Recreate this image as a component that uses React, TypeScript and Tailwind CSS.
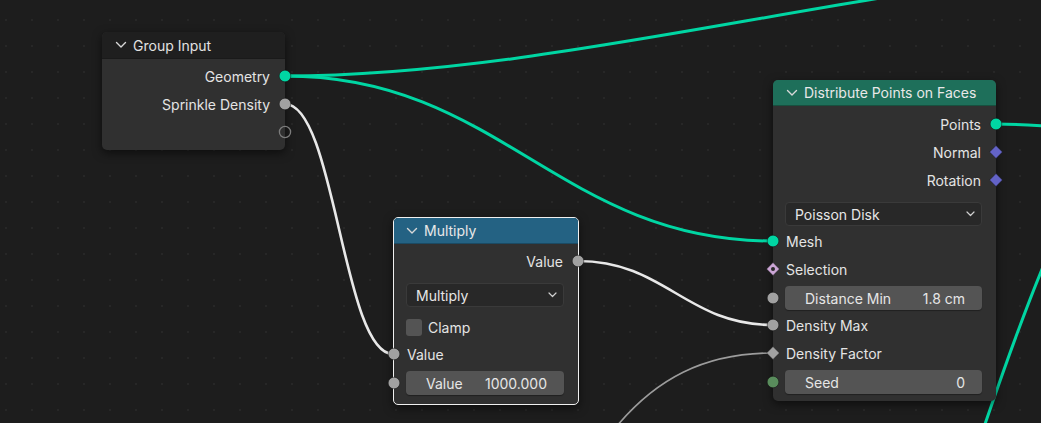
import React from "react";

const FONT = { fontFamily: "Inter, 'Noto Sans', sans-serif" };

function Chevron() {
  return (
    <svg width="12" height="8" viewBox="0 0 12 8" className="shrink-0">
      <polyline points="1.5,1.5 6,6 10.5,1.5" fill="none" stroke="#d8d8d8" strokeWidth="1.4" strokeLinecap="round" strokeLinejoin="round" />
    </svg>
  );
}

function SmallChevron() {
  return (
    <svg width="9" height="6" viewBox="0 0 9 6" className="shrink-0">
      <polyline points="1,1 4.5,4.5 8,1" fill="none" stroke="#d0d0d0" strokeWidth="1.2" strokeLinecap="round" strokeLinejoin="round" />
    </svg>
  );
}

type SocketKind = "geo" | "float" | "empty" | "vec" | "bool" | "floatDiamond" | "int";

function Socket({ kind, side }: { kind: SocketKind; side: "left" | "right" }) {
  const pos = side === "left" ? "left-[-7px]" : "right-[-7px]";
  let inner: React.ReactNode = null;
  const dia = "7,0.6 13.4,7 7,13.4 0.6,7";
  if (kind === "geo") inner = <circle cx="7" cy="7" r="5.8" fill="#00d6a3" stroke="#111" strokeOpacity="0.6" strokeWidth="0.8" />;
  if (kind === "float") inner = <circle cx="7" cy="7" r="5.8" fill="#a1a1a1" stroke="#111" strokeOpacity="0.6" strokeWidth="0.8" />;
  if (kind === "int") inner = <circle cx="7" cy="7" r="5.8" fill="#598c5c" stroke="#111" strokeOpacity="0.6" strokeWidth="0.8" />;
  if (kind === "empty") inner = <circle cx="7" cy="7" r="5.6" fill="none" stroke="#7c7c7c" strokeWidth="1.3" />;
  if (kind === "vec") inner = <polygon points={dia} fill="#6363c7" stroke="#111" strokeOpacity="0.5" strokeWidth="0.8" />;
  if (kind === "floatDiamond") inner = <polygon points={dia} fill="#a1a1a1" stroke="#111" strokeOpacity="0.5" strokeWidth="0.8" />;
  if (kind === "bool")
    inner = (
      <>
        <polygon points={dia} fill="#cca6d6" stroke="#111" strokeOpacity="0.5" strokeWidth="0.8" />
        <circle cx="7" cy="7" r="2" fill="#2a2a2a" />
      </>
    );
  return (
    <svg width="14" height="14" viewBox="0 0 14 14" className={`absolute top-1/2 -translate-y-1/2 ${pos}`}>
      {inner}
    </svg>
  );
}

function OutRow({ label, kind }: { label: string; kind: SocketKind }) {
  return (
    <div className="relative h-[28px] flex items-center justify-end pr-[15px] text-[14px] text-[#e4e4e4]">
      {label}
      <Socket kind={kind} side="right" />
    </div>
  );
}

function InRow({ label, kind, cls = "" }: { label: string; kind: SocketKind; cls?: string }) {
  return (
    <div className={`relative h-[28px] flex items-center pl-[13px] text-[14px] text-[#e4e4e4] ${cls}`}>
      {label}
      <Socket kind={kind} side="left" />
    </div>
  );
}

function Field({ label, value, kind, cls = "" }: { label: string; value: string; kind: SocketKind; cls?: string }) {
  return (
    <div className={`relative h-[24px] ${cls}`}>
      <Socket kind={kind} side="left" />
      <div className="ml-[12px] mr-[14px] h-full rounded-[4px] bg-[#545454] flex items-center justify-between pl-[20px] pr-[17px] text-[14px] text-[#e6e6e6] shadow-[0_1px_1px_rgba(0,0,0,0.35)]">
        <span>{label}</span>
        <span>{value}</span>
      </div>
    </div>
  );
}

function Dropdown({ label, cls = "" }: { label: string; cls?: string }) {
  return (
    <div className={`h-[24px] ml-[12px] mr-[14px] rounded-[4px] bg-[#282828] border border-[#3a3a3a] flex items-center justify-between pl-[9px] pr-[6px] text-[14px] text-[#e6e6e6] ${cls}`}>
      <span>{label}</span>
      <SmallChevron />
    </div>
  );
}

export default function App() {
  return (
    <div
      className="relative w-[1041px] h-[423px] overflow-hidden bg-[#1d1d1d] bg-[radial-gradient(circle,#272727_1px,transparent_1.2px)] bg-[length:26px_26px] bg-[position:-7px_7px]"
      style={FONT}
    >
      {/* wires */}
      <svg className="absolute inset-0" width="1041" height="423" viewBox="0 0 1041 423">
        <path d="M285,76 C480,76 690,28 905,-6" fill="none" stroke="#00d6a3" strokeWidth="3" />
        <path d="M285,76 C500,76 560,241 773,241" fill="none" stroke="#00d6a3" strokeWidth="3" />
        <path d="M996,124 C1015,124 1030,125 1045,126" fill="none" stroke="#00d6a3" strokeWidth="3" />
        <path d="M983,430 C1000,380 1025,310 1045,262" fill="none" stroke="#00d6a3" strokeWidth="3" />
        <path d="M285,104 C335,104 343,354 393,354" fill="none" stroke="#e8e8e8" strokeWidth="2.6" />
        <path d="M578,261 C665,261 686,325 773,325" fill="none" stroke="#e8e8e8" strokeWidth="2.6" />
        <path d="M773,353 C705,353 655,378 612,432" fill="none" stroke="#9c9c9c" strokeWidth="1.6" />
      </svg>

      {/* Group Input */}
      <div className="absolute left-[102px] top-[32px] w-[183px] rounded-[5px] bg-[#303030] shadow-[0_3px_10px_rgba(0,0,0,0.55)]">
        <div className="h-[27px] rounded-t-[5px] bg-[#1f1f1f] border-b border-[#1a1a1a] flex items-center gap-[6px] pl-[13px] text-[14px] text-[#e2e2e2]">
          <Chevron />
          <span>Group Input</span>
        </div>
        <div className="pt-[3px] pb-[4px]">
          <OutRow label="Geometry" kind="geo" />
          <OutRow label="Sprinkle Density" kind="float" />
          <OutRow label="" kind="empty" />
        </div>
      </div>

      {/* Multiply */}
      <div className="absolute left-[393px] top-[217px] w-[186px] rounded-[5px] border border-[#f0f0f0] bg-[#303030] shadow-[0_3px_10px_rgba(0,0,0,0.55)]">
        <div className="h-[26px] rounded-t-[4px] bg-[#246283] border-b border-[#1b4a63] flex items-center gap-[6px] pl-[12px] text-[14px] text-[#e8e8e8]">
          <Chevron />
          <span>Multiply</span>
        </div>
        <div className="pt-[3px] pb-[9px]">
          <OutRow label="Value" kind="float" />
          <Dropdown label="Multiply" cls="mt-[8px]" />
          <div className="mt-[9px] h-[22px] flex items-center gap-[6px] pl-[12px] text-[14px] text-[#e4e4e4]">
            <div className="w-[16px] h-[17px] rounded-[3px] bg-[#545454]" />
            <span>Clamp</span>
          </div>
          <InRow label="Value" kind="float" cls="mt-[2px]" />
          <Field label="Value" value="1000.000" kind="float" cls="mt-[3px]" />
        </div>
      </div>

      {/* Distribute Points on Faces */}
      <div className="absolute left-[773px] top-[80px] w-[223px] rounded-[5px] bg-[#303030] shadow-[0_3px_10px_rgba(0,0,0,0.55)]">
        <div className="h-[26px] rounded-t-[5px] bg-[#1e6f5a] border-b border-[#17503f] flex items-center gap-[6px] pl-[13px] text-[14px] text-[#e8e8e8]">
          <Chevron />
          <span>Distribute Points on Faces</span>
        </div>
        <div className="pt-[4px] pb-[7px]">
          <OutRow label="Points" kind="geo" />
          <OutRow label="Normal" kind="vec" />
          <OutRow label="Rotation" kind="vec" />
          <Dropdown label="Poisson Disk" cls="mt-[8px]" />
          <InRow label="Mesh" kind="geo" cls="mt-[1px]" />
          <InRow label="Selection" kind="bool" />
          <Field label="Distance Min" value="1.8 cm" kind="float" cls="mt-[3px]" />
          <InRow label="Density Max" kind="float" cls="mt-[1px]" />
          <InRow label="Density Factor" kind="floatDiamond" />
          <Field label="Seed" value="0" kind="int" cls="mt-[3px]" />
        </div>
      </div>
    </div>
  );
}
